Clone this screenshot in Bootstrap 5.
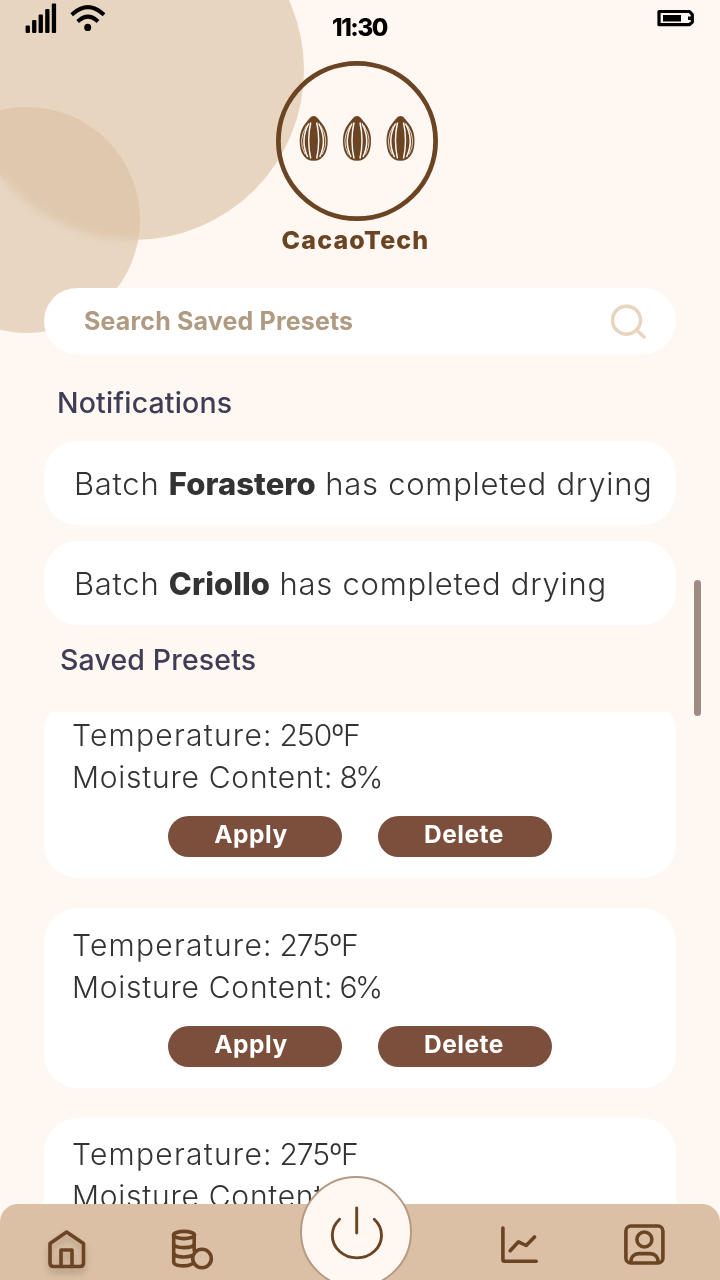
<!DOCTYPE html>
<html lang="en">
<head>
<meta charset="utf-8">
<meta name="viewport" content="width=device-width, initial-scale=1">
<title>CacaoTech</title>
<link rel="stylesheet" href="https://cdn.jsdelivr.net/npm/bootstrap@5.3.0/dist/css/bootstrap.min.css">
<script defer src="https://cdn.jsdelivr.net/npm/bootstrap@5.3.0/dist/js/bootstrap.bundle.min.js"></script>
<style>
body{background:#fff8f2;font-family:"Inter","Open Sans",sans-serif;color:#333}
.screen{width:720px;height:1280px;background:#fff8f2}
.blob{border-radius:50%}
.blob-big{left:-36px;top:-100px;width:340px;height:340px;background:#e8d5c0}
.blob-small{left:-86px;top:107px;width:226px;height:226px;background:rgba(217,191,162,.6);backdrop-filter:blur(4px)}
svg{display:block}
.status{height:61px;padding:3px 26px 0 25px;color:#000}
.side{width:90px}
.clock{font-size:24px;font-weight:800;line-height:32px;padding-top:9px;letter-spacing:-1.4px}
.logo{height:160px;margin-left:-6px}
.brand{height:38px;line-height:38px;font-size:25px;font-weight:800;letter-spacing:1.15px;color:#6b4423;margin-left:-9px}
.search{height:66px;margin:29px 44px 0;padding:1px 30px 0 40px;border-radius:33px;font-size:25px;font-weight:700;letter-spacing:.17px;color:#b09a82}
.heading{font-size:28.5px;font-weight:500;letter-spacing:.15px;color:#3f3d56;line-height:40px}
.heading-notices{margin:29px 0 0 57px}
.heading-presets{margin:15px 0 0 60px}
.notices{margin:18px 44px 0}
.notice{height:84px;border-radius:34px;padding:2px 0 0 30px;font-size:31px;font-weight:300;white-space:nowrap;letter-spacing:.73px}
.notice strong{font-weight:800;letter-spacing:.05px}
.presets{height:568px;margin:32px 44px 0;gap:30px}
.preset{height:180px;border-radius:34px;padding:16px 28px 0;font-size:30px;font-weight:300;line-height:42px;white-space:nowrap}
.temp{letter-spacing:1.25px}
.temp span{letter-spacing:-1px;margin-left:-3px}
.moisture{letter-spacing:.75px}
.moisture span{letter-spacing:-2.5px;margin-left:-3px}
.presets .preset:first-child{margin-top:-14px}
.presets .preset:last-child{padding-top:15px}
.actions{gap:36px;margin-top:18px}
.pill,.pill:hover{width:174px;height:41px;border-radius:21px;background:#7b4f3c;color:#fff;font-size:24.5px;font-weight:700;letter-spacing:.5px;line-height:37px;padding:0 8px 4px 0;border:0}
.pill-delete,.pill-delete:hover{padding-right:2px}
.thumb{left:694px;top:580px;width:7px;height:136px;border-radius:4px;background:#9e8c84}
.tabs{height:76px;border-radius:18px 18px 0 0;background:#dbc0a5;padding:18px 54px 0 47px}
.tabs svg{fill:none;stroke:#6b4423;stroke-width:3.6;stroke-linecap:round;stroke-linejoin:round;overflow:visible}
.gap-mid{width:117px}
.home-icon{filter:drop-shadow(0 5px 3px rgba(0,0,0,.2))}
.power{left:300px;top:1176px;width:112px;height:112px;border-radius:50%;background:#fff8f2;border:2px solid #b39a85}
.power svg{margin:28px 0 0 28px}
</style>
</head>
<body>
<div class="screen position-relative overflow-hidden mx-auto">
<div class="blob blob-big position-absolute"></div>
<div class="blob blob-small position-absolute"></div>
<div class="position-relative d-flex flex-column h-100">
  <header class="status d-flex justify-content-between">
    <div class="side d-flex">
      <svg width="32" height="31" viewBox="25 3 32 31"><g fill="#000"><rect x="25.6" y="25.6" width="4.3" height="7.4" rx="1"/><rect x="32.1" y="20" width="4.3" height="13" rx="1"/><rect x="38.6" y="14.4" width="4.3" height="18.6" rx="1"/><rect x="45.2" y="9" width="4.3" height="24" rx="1"/><rect x="51.8" y="3.4" width="4.3" height="29.6" rx="1"/></g></svg>
      <svg class="flex-shrink-0" width="50" height="31" viewBox="57 3 50 31"><path d="M73.200 13.500Q88 .8 102.500 13.500M79.200 20.300Q88 13 96.500 20.300" fill="none" stroke="#000" stroke-width="4" stroke-linecap="square"/><ellipse cx="87.700" cy="27.400" rx="3.500" ry="3.700"/></svg>
    </div>
    <div class="clock">11:30</div>
    <div class="side d-flex justify-content-end">
      <svg width="37" height="31" viewBox="657 3 37 31"><path d="M659 11.500H689.500L692.300 14.500V22L689.500 24.700H659Z" fill="#fff8f2" stroke="#000" stroke-width="3.200" stroke-linejoin="round"/><path d="M663 15h18v6.500h-18zM688 16.500h4v3.500h-4z"/></svg>
    </div>
  </header>
  <div class="logo d-flex justify-content-center">
    <svg width="162" height="160" viewBox="0 0 162 160"><defs><g id="bean"><path d="M0-22.500C3-22.500 5-19 8-15.500C12-10.500 14-5 14 2.500C14 13 10 22.300 0 22.300S-14 13-14 2.500C-14-5-12-10.500-8-15.500C-5-19-3-22.500 0-22.500Z" fill="#6b4423"/><path d="M-3-16Q-7 2-3 20M3-16Q7 2 3 20M-5-15Q-14 2-6 18.500M5-15Q14 2 6 18.500" fill="none" stroke="#fff8f2" stroke-width="1.500"/><path d="M-7-13Q-16.500 2-8.500 16M7-13Q16.500 2 8.500 16" fill="none" stroke="#fff8f2" stroke-width=".8"/></g></defs>
    <ellipse cx="81" cy="80" rx="78.600" ry="77.600" fill="none" stroke="#6b4423" stroke-width="4.800"/>
    <use href="#bean" x="37.700" y="77.500"/><use href="#bean" x="81" y="77.500"/><use href="#bean" x="124.500" y="77.500"/></svg>
  </div>
  <div class="brand text-center">CacaoTech</div>
  <div class="search bg-white d-flex align-items-center justify-content-between">
    <span>Search Saved Presets</span>
    <svg width="36" height="36" viewBox="0 0 36 36" fill="none" stroke="#e8d5c0" stroke-width="3.500" stroke-linecap="round"><circle cx="16.500" cy="16.200" r="14"/><path d="M27 26.500l7 6.500"/></svg>
  </div>
  <h2 class="heading heading-notices mb-0">Notifications</h2>
  <div class="notices d-flex flex-column gap-3">
    <div class="notice bg-white d-flex align-items-center"><span>Batch <strong>Forastero</strong> has completed drying</span></div>
    <div class="notice bg-white d-flex align-items-center"><span>Batch <strong>Criollo</strong> has completed drying</span></div>
  </div>
  <h2 class="heading heading-presets mb-0">Saved Presets</h2>
  <div class="presets overflow-hidden d-flex flex-column flex-shrink-0">
    <div class="preset bg-white flex-shrink-0"><div class="temp">Temperature: <span>250ºF</span></div><div class="moisture">Moisture Content: <span>8%</span></div>
      <div class="actions d-flex justify-content-center"><button class="btn pill">Apply</button><button class="btn pill pill-delete">Delete</button></div></div>
    <div class="preset bg-white flex-shrink-0"><div class="temp">Temperature: <span>275ºF</span></div><div class="moisture">Moisture Content: <span>6%</span></div>
      <div class="actions d-flex justify-content-center"><button class="btn pill">Apply</button><button class="btn pill pill-delete">Delete</button></div></div>
    <div class="preset bg-white flex-shrink-0"><div class="temp">Temperature: <span>275ºF</span></div><div class="moisture">Moisture Content</div></div>
  </div>
</div>
<div class="thumb position-absolute"></div>
<nav class="tabs position-absolute bottom-0 start-0 w-100 d-flex justify-content-between">
  <svg class="home-icon" width="39" height="48" viewBox="47 1222 39 48"><path d="M50 1243.500L66.600 1232L83.500 1243.500V1263Q83.500 1266.500 80 1266.500H53.500Q50 1266.500 50 1263ZM61 1265.500V1250H72V1265.500"/></svg>
  <svg width="43" height="48" viewBox="171 1221.500 43 48"><ellipse cx="184" cy="1234.500" rx="10.500" ry="3.600"/><path d="M173.700 1235V1261.500C173.700 1266 187 1266.500 192 1263.500M194.200 1235V1250M173.700 1243.500C175 1248.300 193 1248.300 194.200 1243.500M173.700 1253C176 1257 186 1257.300 192.500 1255"/><circle cx="202" cy="1258" r="9.300"/></svg>
  <div class="gap-mid"></div>
  <svg width="38" height="48" viewBox="500 1222 38 48"><path d="M501.900 1228V1259.500Q501.900 1261.200 503.600 1261.200H535.200M509.200 1250.700L517.500 1241.800L525.200 1245.500L533.500 1237"/></svg>
  <svg width="42" height="48" viewBox="624 1222 42 48"><rect x="625.900" y="1226" width="37" height="37" rx="5"/><circle cx="644.400" cy="1239.500" r="7.500"/><path d="M630.800 1262C630.800 1257 634 1253.600 639 1253.600H650C655 1253.600 658.200 1257 658.200 1262"/></svg>
</nav>
<div class="power position-absolute"><svg width="54" height="54" viewBox="330 1206 54 54" fill="none" stroke="#6b4423" stroke-width="2.900" stroke-linecap="round"><path d="M356.700 1208V1233M339.600 1219.200A24.600 22.600 0 1 0 374.200 1219.200"/></svg></div>
</div>
</body>
</html>
